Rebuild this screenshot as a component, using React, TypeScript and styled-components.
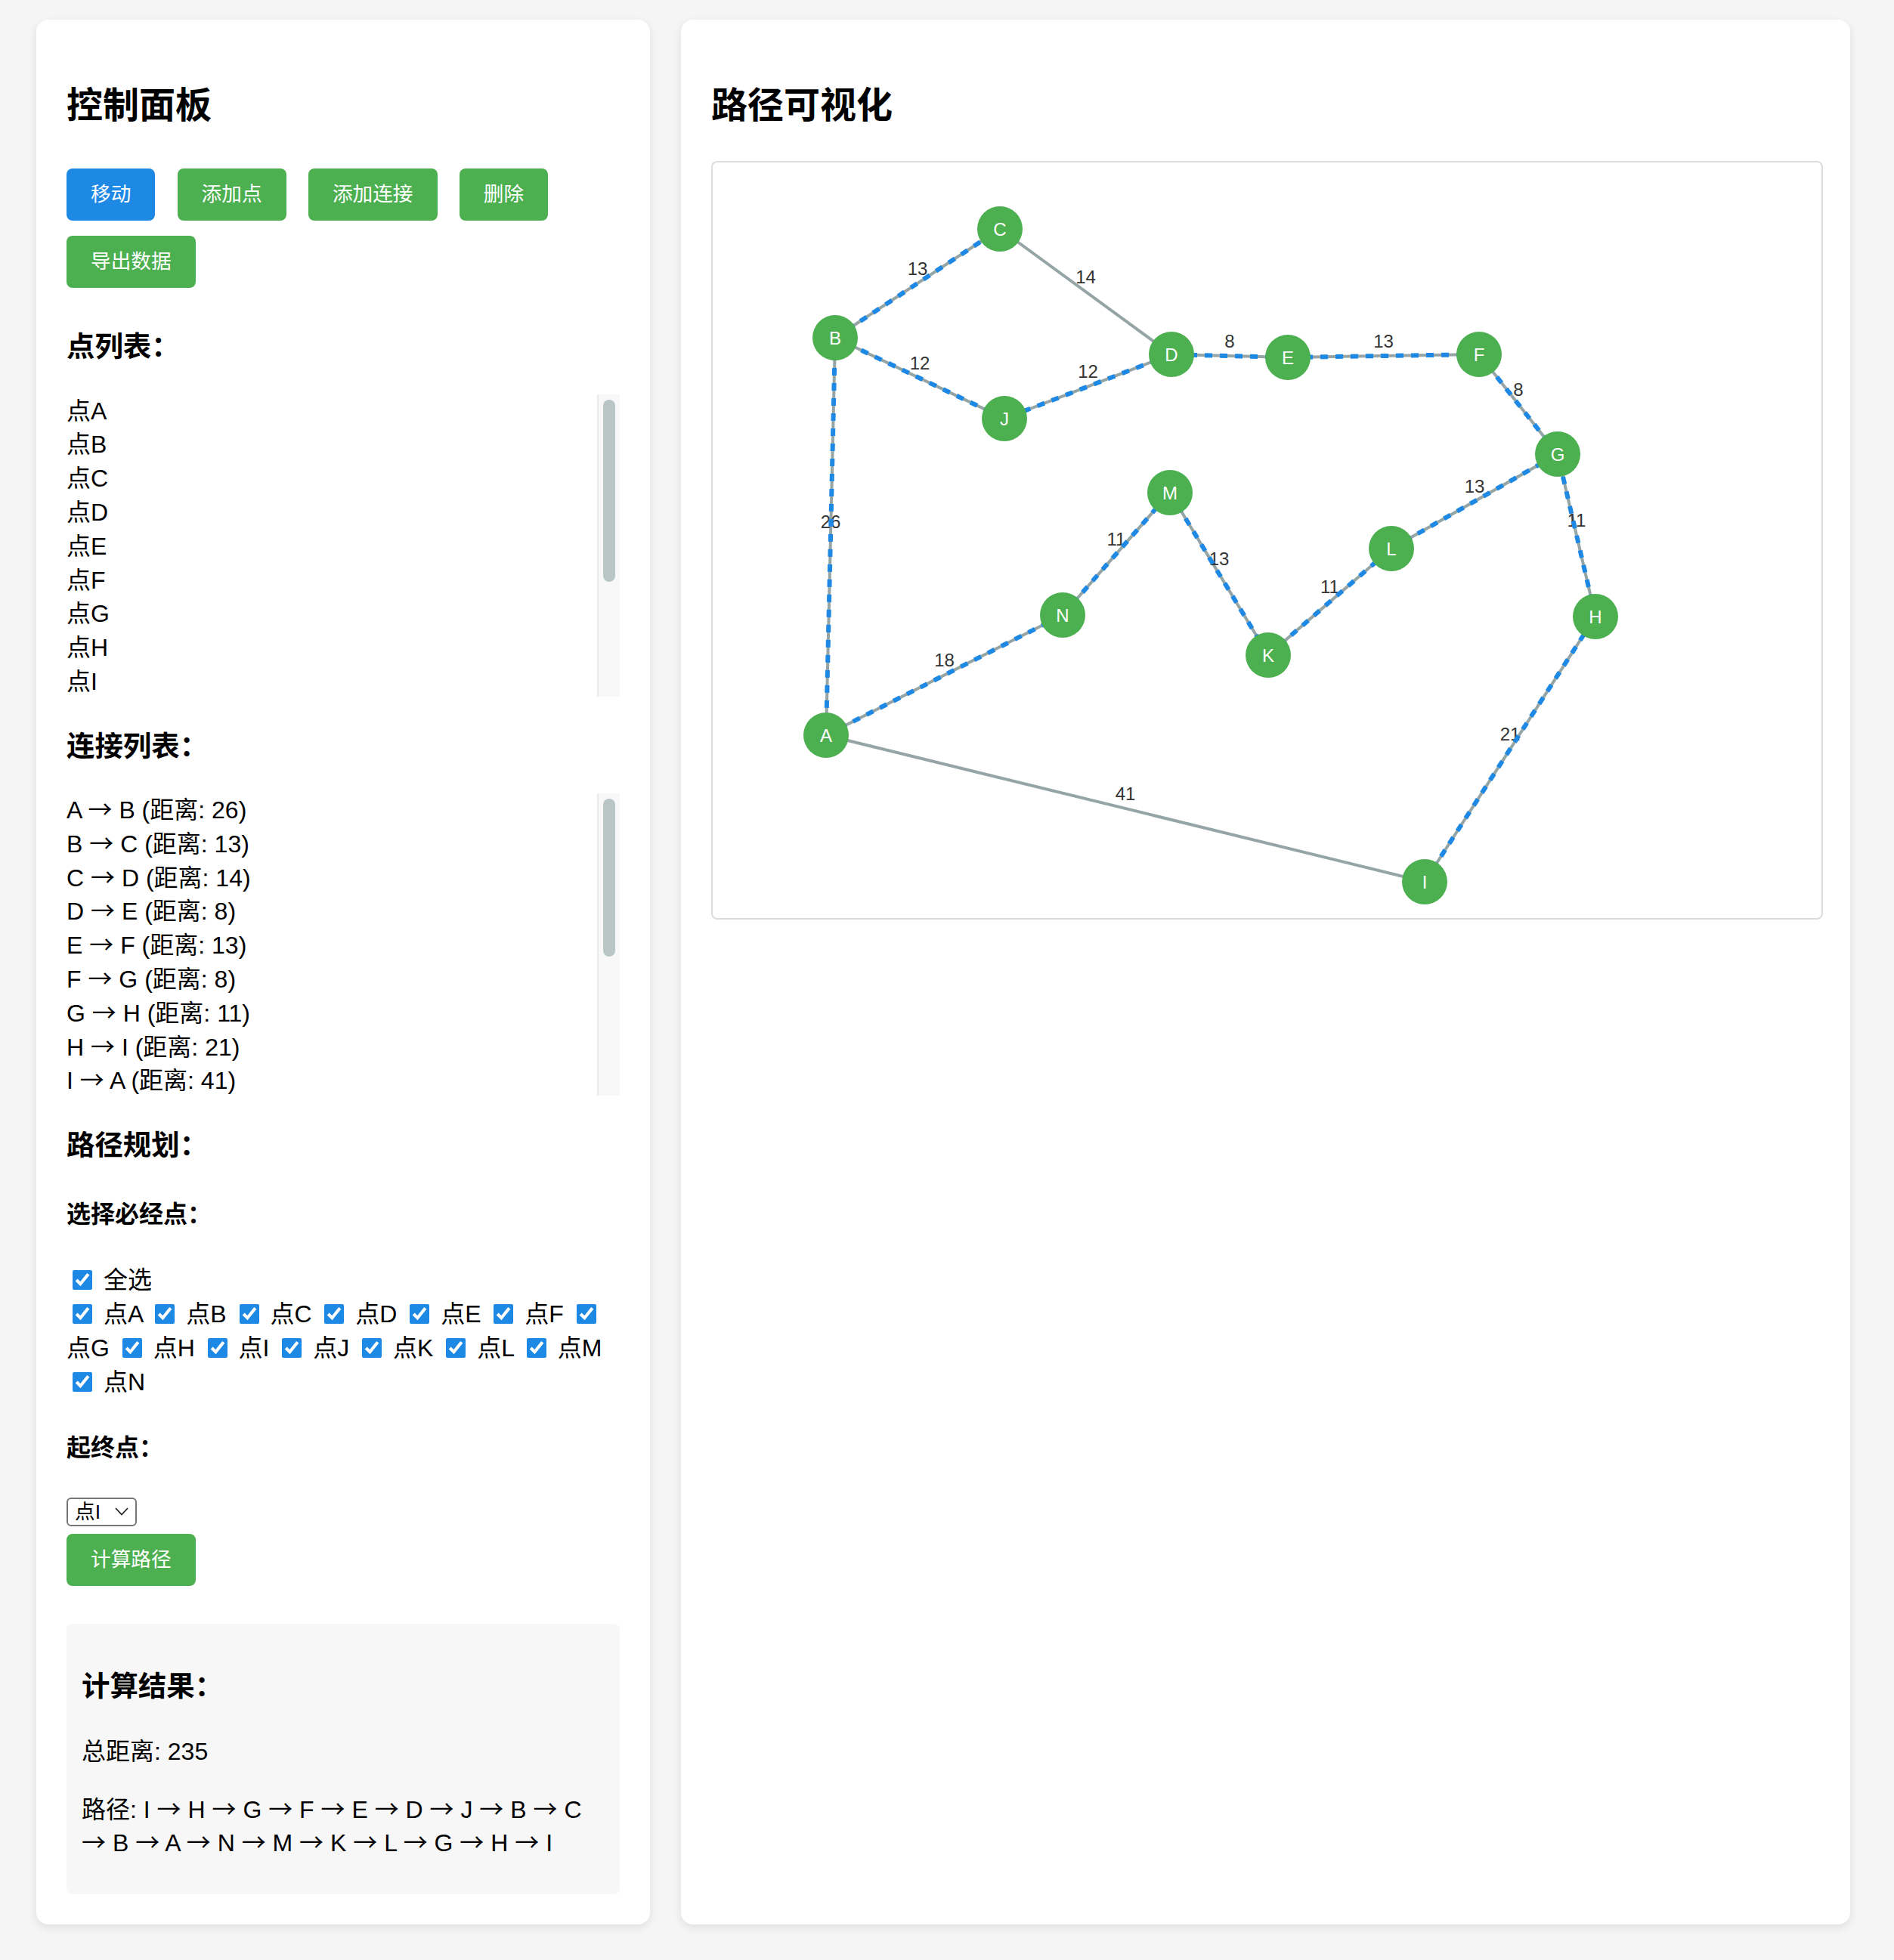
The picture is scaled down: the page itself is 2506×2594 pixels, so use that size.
import React, { useState } from "react";
import styled, { createGlobalStyle } from "styled-components";

const GlobalStyle = createGlobalStyle`
  * { box-sizing: border-box; }
  html, body { margin: 0; padding: 0; background: #f5f5f5; }
  body {
    font-family: "Liberation Sans", "Noto Sans CJK SC", sans-serif;
    font-size: 32px;
    line-height: 44.8px;
    color: #000;
  }
`;

const Page = styled.div`
  display: flex;
  align-items: stretch;
  gap: 41px;
  padding: 26px 58px 48px 48px;
`;

const Panel = styled.section`
  background: #fff;
  border-radius: 16px;
  padding: 40px;
  box-shadow: 0 4px 12px rgba(0, 0, 0, 0.09);
`;

const LeftPanel = styled(Panel)`
  flex: 0 0 812px;
`;

const RightPanel = styled(Panel)`
  flex: 1;
  min-width: 0;
`;

const Title = styled.h2`
  font-size: 48px;
  line-height: 67.2px;
  font-weight: 700;
  margin: 40px 0;
`;

const ButtonRow = styled.div`
  display: flex;
  flex-wrap: wrap;
  column-gap: 29.3px;
  row-gap: 20px;
  padding: 10px 0 12px;
`;

const ActionButton = styled.button<{ $variant?: "primary" | "success" }>`
  font-family: inherit;
  font-size: 26.67px;
  line-height: 37px;
  padding: 16px 32px;
  border: none;
  border-radius: 8px;
  color: #fff;
  cursor: pointer;
  background: ${(p) => (p.$variant === "primary" ? "#1e88e5" : "#4caf50")};
`;

const SectionTitle = styled.h3`
  font-size: 37.44px;
  line-height: 52.4px;
  font-weight: 700;
  margin: 40px 0 36px;
`;

const ScrollFrame = styled.div`
  display: flex;
  height: 400px;
`;

const ScrollContent = styled.div`
  flex: 1;
  min-width: 0;
  overflow-y: auto;
  scrollbar-width: none;
  &::-webkit-scrollbar {
    display: none;
  }
`;

const ScrollTrack = styled.div`
  flex: 0 0 30px;
  background: #f8f8f8;
  border-left: 2px solid #e9e9e9;
  padding: 7px 6px 7px 6px;
`;

const ScrollThumb = styled.div`
  width: 16px;
  border-radius: 8px;
  background: #b9c6c6;
`;

const ListItem = styled.div``;

const Arrow = styled.span`
  font-family: "Noto Sans CJK SC", sans-serif;
  line-height: 0;
`;

const SubTitle = styled.h4`
  font-size: 32px;
  line-height: 44.8px;
  font-weight: 700;
  margin: 42.6px 0;
`;

const CheckGroup = styled.div``;

const CheckLabel = styled.label`
  cursor: pointer;
`;

const Check = styled.input.attrs({ type: "checkbox" })`
  width: 26px;
  height: 26px;
  margin: 6px 6px 6px 8px;
  accent-color: #1e88e5;
  vertical-align: -2px;
`;

const SelectBox = styled.div`
  display: flex;
  align-items: center;
  width: 93px;
  height: 38px;
  border: 2px solid #767676;
  border-radius: 6px;
  background: #fff;
  margin-bottom: 10px;
  padding-right: 9px;
`;

const Select = styled.select`
  appearance: none;
  -webkit-appearance: none;
  border: none;
  outline: none;
  background: transparent;
  font-family: inherit;
  font-size: 26.67px;
  color: #000;
  padding: 0 0 0 9px;
  flex: 1;
  min-width: 0;
  height: 100%;
`;

const Chevron = styled.svg`
  flex: 0 0 auto;
  pointer-events: none;
`;

const ResultBox = styled.div`
  margin-top: 50px;
  padding: 20px;
  background: #f7f7f7;
  border-radius: 8px;
`;

const ResultTitle = styled.h3`
  font-size: 37.44px;
  line-height: 52.4px;
  font-weight: 700;
  margin: 37.4px 0;
`;

const ResultText = styled.p`
  margin: 32px 0;
  &:last-child {
    margin-bottom: 25px;
  }
`;

const GraphBox = styled.div`
  width: calc(100% + 4px);
  border: 2px solid #dcdcdc;
  border-radius: 8px;
  background: #fff;
  overflow: hidden;
`;

const GraphCanvas = styled.svg`
  display: block;
  width: 100%;
  height: 1000px;
`;

const points = ["A", "B", "C", "D", "E", "F", "G", "H", "I", "J", "K", "L", "M", "N"];

const nodes: Record<string, [number, number]> = {
  A: [150, 758],
  B: [162, 232],
  C: [380, 88],
  D: [607, 254],
  E: [761, 258],
  F: [1014, 254],
  G: [1118, 386],
  H: [1168, 601],
  I: [942, 952],
  J: [386, 339],
  K: [735, 652],
  L: [898, 511],
  M: [605, 437],
  N: [463, 599],
};

const edges: [string, string, number][] = [
  ["A", "B", 26],
  ["B", "C", 13],
  ["C", "D", 14],
  ["D", "E", 8],
  ["E", "F", 13],
  ["F", "G", 8],
  ["G", "H", 11],
  ["H", "I", 21],
  ["I", "A", 41],
  ["B", "J", 12],
  ["J", "D", 12],
  ["A", "N", 18],
  ["N", "M", 11],
  ["M", "K", 13],
  ["K", "L", 11],
  ["L", "G", 13],
];

const route = ["I", "H", "G", "F", "E", "D", "J", "B", "C", "B", "A", "N", "M", "K", "L", "G", "H", "I"];

const routeSegments: [string, string][] = (() => {
  const seen = new Set<string>();
  const out: [string, string][] = [];
  for (let i = 1; i < route.length; i++) {
    const a = route[i - 1];
    const b = route[i];
    const key = [a, b].sort().join("-");
    if (!seen.has(key)) {
      seen.add(key);
      out.push([a, b]);
    }
  }
  return out;
})();

const LIST_HEIGHT = 400;
const ROW_HEIGHT = 44.8;

const ScrollList: React.FC<{ rows: number; children: React.ReactNode }> = ({ rows, children }) => {
  const [top, setTop] = useState(0);
  const contentHeight = Math.max(rows * ROW_HEIGHT, LIST_HEIGHT);
  const ratio = LIST_HEIGHT / contentHeight;
  const thumbHeight = LIST_HEIGHT * ratio - 14;
  const thumbOffset = top * ratio;
  return (
    <ScrollFrame>
      <ScrollContent onScroll={(e) => setTop(e.currentTarget.scrollTop)}>{children}</ScrollContent>
      <ScrollTrack>
        <ScrollThumb style={{ height: thumbHeight, marginTop: thumbOffset }} />
      </ScrollTrack>
    </ScrollFrame>
  );
};

const Graph: React.FC = () => (
  <GraphCanvas viewBox="0 0 1467 1000" preserveAspectRatio="xMinYMin meet">
    {edges.map(([a, b, d]) => {
      const [x1, y1] = nodes[a];
      const [x2, y2] = nodes[b];
      const mx = (x1 + x2) / 2;
      const my = (y1 + y2) / 2;
      return (
        <g key={a + b}>
          <line x1={x1} y1={y1} x2={x2} y2={y2} stroke="#95a5a6" strokeWidth={4} />
          <text
            x={mx}
            y={my - 11.5}
            textAnchor="middle"
            fontFamily="Liberation Sans, Arial, sans-serif"
            fontSize={24}
            fill="#333"
          >
            {d}
          </text>
        </g>
      );
    })}
    {routeSegments.map(([a, b], i) => {
      const [x1, y1] = nodes[a];
      const [x2, y2] = nodes[b];
      return (
        <line
          key={i}
          x1={x1}
          y1={y1}
          x2={x2}
          y2={y2}
          stroke="#1e88e5"
          strokeWidth={6}
          strokeDasharray="10 10"
        />
      );
    })}
    {points.map((p) => {
      const [x, y] = nodes[p];
      return (
        <g key={p}>
          <circle cx={x} cy={y} r={30} fill="#4caf50" />
          <text
            x={x}
            y={y + 8.6}
            textAnchor="middle"
            fontFamily="Liberation Sans, Arial, sans-serif"
            fontSize={24}
            fill="#fff"
          >
            {p}
          </text>
        </g>
      );
    })}
  </GraphCanvas>
);

export default function App() {
  return (
    <>
      <GlobalStyle />
      <Page>
        <LeftPanel>
          <Title>控制面板</Title>
          <ButtonRow>
            <ActionButton $variant="primary">移动</ActionButton>
            <ActionButton $variant="success">添加点</ActionButton>
            <ActionButton $variant="success">添加连接</ActionButton>
            <ActionButton $variant="success">删除</ActionButton>
            <ActionButton $variant="success">导出数据</ActionButton>
          </ButtonRow>

          <SectionTitle>点列表：</SectionTitle>
          <ScrollList rows={points.length}>
            {points.map((p) => (
              <ListItem key={p}>点{p}</ListItem>
            ))}
          </ScrollList>

          <SectionTitle>连接列表：</SectionTitle>
          <ScrollList rows={edges.length}>
            {edges.map(([a, b, d]) => (
              <ListItem key={a + b}>
                {a} <Arrow>→</Arrow> {b} (距离: {d})
              </ListItem>
            ))}
          </ScrollList>

          <SectionTitle>路径规划：</SectionTitle>
          <SubTitle>选择必经点：</SubTitle>
          <CheckGroup>
            <CheckLabel>
              <Check defaultChecked />
              {" 全选"}
            </CheckLabel>
          </CheckGroup>
          <CheckGroup>
            {points.map((p) => (
              <React.Fragment key={p}>
                <CheckLabel>
                  <Check defaultChecked />
                  {` 点${p}`}
                </CheckLabel>{" "}
              </React.Fragment>
            ))}
          </CheckGroup>

          <SubTitle>起终点：</SubTitle>
          <SelectBox>
            <Select defaultValue="I">
              {points.map((p) => (
                <option key={p} value={p}>
                  点{p}
                </option>
              ))}
            </Select>
            <Chevron width="18" height="11" viewBox="0 0 18 11">
              <path d="M1 1 L9 9.5 L17 1" fill="none" stroke="#222" strokeWidth="1.8" />
            </Chevron>
          </SelectBox>
          <ActionButton $variant="success">计算路径</ActionButton>

          <ResultBox>
            <ResultTitle>计算结果：</ResultTitle>
            <ResultText>总距离: 235</ResultText>
            <ResultText>
              路径:{" "}
              {route.map((p, i) => (
                <React.Fragment key={i}>
                  {i > 0 && (
                    <>
                      {" "}
                      <Arrow>→</Arrow>{" "}
                    </>
                  )}
                  {p}
                </React.Fragment>
              ))}
            </ResultText>
          </ResultBox>
        </LeftPanel>

        <RightPanel>
          <Title>路径可视化</Title>
          <GraphBox>
            <Graph />
          </GraphBox>
        </RightPanel>
      </Page>
    </>
  );
}
